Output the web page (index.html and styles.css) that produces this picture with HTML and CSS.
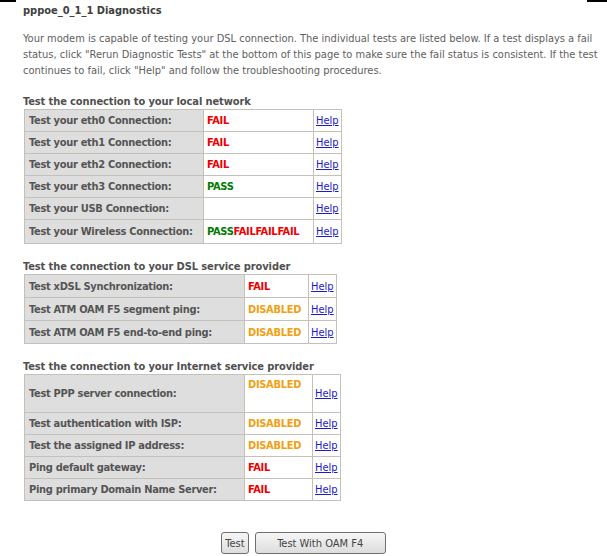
FILE: index.html
```html
<!DOCTYPE html>
<html lang="en">
<head>
    <meta charset="UTF-8">
    <title>Diagnostics</title>
    <link rel="stylesheet" href="styles.css">
</head>
<body>
    <div class="frame-top">
        <span class="frame-bar left"></span>
        <span class="frame-bar right"></span>
    </div>
    <div class="page">
        <div class="title">pppoe_0_1_1 Diagnostics</div>
        <p class="intro">
            Your modem is capable of testing your DSL connection. The individual tests are listed below. If a test displays a fail<br>
            status, click "Rerun Diagnostic Tests" at the bottom of this page to make sure the fail status is consistent. If the test<br>
            continues to fail, click "Help" and follow the troubleshooting procedures.
        </p>

        <!-- Red local -->
        <div class="section-title">Test the connection to your local network</div>
        <table class="diag local">
            <tr><td class="label">Test your eth0 Connection:</td><td class="status"><span class="fail">FAIL</span></td><td class="help"><a href="#">Help</a></td></tr>
            <tr><td class="label">Test your eth1 Connection:</td><td class="status"><span class="fail">FAIL</span></td><td class="help"><a href="#">Help</a></td></tr>
            <tr><td class="label">Test your eth2 Connection:</td><td class="status"><span class="fail">FAIL</span></td><td class="help"><a href="#">Help</a></td></tr>
            <tr><td class="label">Test your eth3 Connection:</td><td class="status"><span class="pass">PASS</span></td><td class="help"><a href="#">Help</a></td></tr>
            <tr><td class="label">Test your USB Connection:</td><td class="status"></td><td class="help"><a href="#">Help</a></td></tr>
            <tr class="tall"><td class="label">Test your Wireless Connection:</td><td class="status"><span class="pass">PASS</span><span class="fail">FAIL</span><span class="fail">FAIL</span><span class="fail">FAIL</span></td><td class="help"><a href="#">Help</a></td></tr>
        </table>

        <!-- DSL -->
        <div class="section-title">Test the connection to your DSL service provider</div>
        <table class="diag dsl">
            <tr><td class="label">Test xDSL Synchronization:</td><td class="status"><span class="fail">FAIL</span></td><td class="help"><a href="#">Help</a></td></tr>
            <tr><td class="label">Test ATM OAM F5 segment ping:</td><td class="status"><span class="disabled">DISABLED</span></td><td class="help"><a href="#">Help</a></td></tr>
            <tr><td class="label">Test ATM OAM F5 end-to-end ping:</td><td class="status"><span class="disabled">DISABLED</span></td><td class="help"><a href="#">Help</a></td></tr>
        </table>

        <!-- ISP -->
        <div class="section-title">Test the connection to your Internet service provider</div>
        <table class="diag isp">
            <tr class="ppp"><td class="label">Test PPP server connection:</td><td class="status top"><span class="disabled">DISABLED</span></td><td class="help"><a href="#">Help</a></td></tr>
            <tr><td class="label">Test authentication with ISP:</td><td class="status"><span class="disabled">DISABLED</span></td><td class="help"><a href="#">Help</a></td></tr>
            <tr><td class="label">Test the assigned IP address:</td><td class="status"><span class="disabled">DISABLED</span></td><td class="help"><a href="#">Help</a></td></tr>
            <tr><td class="label">Ping default gateway:</td><td class="status"><span class="fail">FAIL</span></td><td class="help"><a href="#">Help</a></td></tr>
            <tr><td class="label">Ping primary Domain Name Server:</td><td class="status"><span class="fail">FAIL</span></td><td class="help"><a href="#">Help</a></td></tr>
        </table>
    </div>
    <div class="actions">
        <button class="btn">Test</button>
        <button class="btn wide">Test With OAM F4</button>
    </div>
</body>
</html>
```

FILE: styles.css
```css
body {
    margin: 0;
    background-color: #ffffff;
    font-family: 'DejaVu Sans Condensed', 'DejaVu Sans', sans-serif;
    font-size: 11px;
    color: #555555;
}
.frame-top {
    display: flex;
    justify-content: space-between;
    height: 2px;
}
.frame-bar {
    display: block;
    height: 2px;
    background-color: #000000;
}
.frame-bar.left {
    width: 16px;
}
.frame-bar.right {
    width: 20px;
}
.page {
    padding-left: 23px;
}
.title {
    font-weight: bold;
    color: #404040;
    line-height: 13px;
    margin-top: 2px;
}
.intro {
    margin: 14px 0 0 0;
    line-height: 16px;
    color: #606060;
    white-space: nowrap;
}
.section-title {
    font-weight: bold;
    color: #505050;
    margin-top: 16px;
    line-height: 13px;
    letter-spacing: -0.1px;
}
table.diag {
    border-collapse: collapse;
    border: 1px solid #c4c2b8;
    margin-left: 1px;
    margin-top: 1px;
}
.diag td {
    border: 1px solid #c4c2b8;
    height: 21px;
    padding: 0 3px;
    font-weight: bold;
    font-size: 11px;
    white-space: nowrap;
}
.diag td.label,
.diag td.status {
    letter-spacing: -0.3px;
}
.diag td.label {
    background-color: #dedede;
    color: #555555;
    padding-left: 4px;
}
.diag td.status,
.diag td.help {
    background-color: #ffffff;
}
.diag td.help {
    font-weight: normal;
    padding: 0 2px;
}
.local td.label { width: 171px; }
.local td.status { width: 103px; }
.local td.help { width: 23px; }
.local tr.tall td { height: 23px; }
.dsl td { height: 22px; }
.dsl td.label { width: 212px; }
.dsl td.status { width: 57px; }
.dsl td.help { width: 23px; }
.isp td.label { width: 212px; }
.isp td.status { width: 61px; }
.isp td.help { width: 23px; }
.isp tr.ppp td { height: 34px; }
.diag td.top {
    vertical-align: top;
    padding-top: 3px;
}
.fail { color: #ee0000; }
.pass { color: #007a00; }
.disabled { color: #f0a010; }
.help a {
    color: #1a1acc;
    text-decoration: underline;
}
.actions {
    display: flex;
    justify-content: center;
    gap: 6px;
    margin-top: 31px;
}
.btn {
    font-family: 'DejaVu Sans Condensed', 'DejaVu Sans', sans-serif;
    font-size: 11px;
    color: #444444;
    height: 22px;
    padding: 0 3px;
    border: 1px solid #707070;
    border-radius: 3px;
    background: linear-gradient(#f6f6f6, #dddddd);
}
.btn.wide {
    width: 131px;
}
```
